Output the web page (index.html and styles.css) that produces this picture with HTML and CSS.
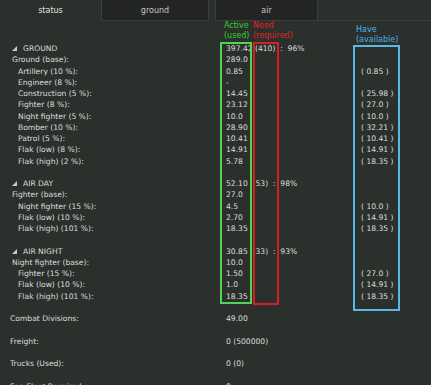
FILE: index.html
```html
<!DOCTYPE html>
<html lang="en">
<head>
    <meta charset="UTF-8">
    <meta name="viewport" content="width=device-width, initial-scale=1.0">
    <title>status</title>
    <link rel="stylesheet" href="styles.css">
</head>
<body>
    <div class="tabs">
        <div class="tab active">status</div>
        <div class="tab wide">ground</div>
        <div class="tab">air</div>
        <div class="tab-fill"></div>
    </div>

    <div class="panel">
        <div class="row head"><span class="lbl"><svg class="tri" width="5" height="5" viewBox="0 0 5 5"><polygon points="5,0 5,5 0,5"/></svg>GROUND</span><span class="val">397.42 (410)  :  96%</span><span></span></div>
        <div class="row"><span class="lbl">Ground (base):</span><span class="val">289.0</span><span></span></div>
        <div class="row"><span class="lbl sub">Artillery (10 %):</span><span class="val">0.85</span><span>( 0.85 )</span></div>
        <div class="row"><span class="lbl sub">Engineer (8 %):</span><span class="val">-</span><span></span></div>
        <div class="row"><span class="lbl sub">Construction (5 %):</span><span class="val">14.45</span><span>( 25.98 )</span></div>
        <div class="row"><span class="lbl sub">Fighter (8 %):</span><span class="val">23.12</span><span>( 27.0 )</span></div>
        <div class="row"><span class="lbl sub">Night fighter (5 %):</span><span class="val">10.0</span><span>( 10.0 )</span></div>
        <div class="row"><span class="lbl sub">Bomber (10 %):</span><span class="val">28.90</span><span>( 32.21 )</span></div>
        <div class="row"><span class="lbl sub">Patrol (5 %):</span><span class="val">10.41</span><span>( 10.41 )</span></div>
        <div class="row"><span class="lbl sub">Flak (low) (8 %):</span><span class="val">14.91</span><span>( 14.91 )</span></div>
        <div class="row"><span class="lbl sub">Flak (high) (2 %):</span><span class="val">5.78</span><span>( 18.35 )</span></div>
        <div class="row blank"></div>

        <div class="row head"><span class="lbl"><svg class="tri" width="5" height="5" viewBox="0 0 5 5"><polygon points="5,0 5,5 0,5"/></svg>AIR DAY</span><span class="val">52.10  (53)  :  98%</span><span></span></div>
        <div class="row"><span class="lbl">Fighter (base):</span><span class="val">27.0</span><span></span></div>
        <div class="row"><span class="lbl sub">Night fighter (15 %):</span><span class="val">4.5</span><span>( 10.0 )</span></div>
        <div class="row"><span class="lbl sub">Flak (low) (10 %):</span><span class="val">2.70</span><span>( 14.91 )</span></div>
        <div class="row"><span class="lbl sub">Flak (high) (101 %):</span><span class="val">18.35</span><span>( 18.35 )</span></div>
        <div class="row blank"></div>

        <div class="row head"><span class="lbl"><svg class="tri" width="5" height="5" viewBox="0 0 5 5"><polygon points="5,0 5,5 0,5"/></svg>AIR NIGHT</span><span class="val">30.85  (33)  :  93%</span><span></span></div>
        <div class="row"><span class="lbl">Night fighter (base):</span><span class="val">10.0</span><span></span></div>
        <div class="row"><span class="lbl sub">Fighter (15 %):</span><span class="val">1.50</span><span>( 27.0 )</span></div>
        <div class="row"><span class="lbl sub">Flak (low) (10 %):</span><span class="val">1.0</span><span>( 14.91 )</span></div>
        <div class="row"><span class="lbl sub">Flak (high) (101 %):</span><span class="val">18.35</span><span>( 18.35 )</span></div>
        <div class="row blank"></div>

        <div class="row stat"><span class="lbl">Combat Divisions:</span><span class="val">49.00</span><span></span></div>
        <div class="row blank"></div>
        <div class="row stat"><span class="lbl">Freight:</span><span class="val">0 (500000)</span><span></span></div>
        <div class="row blank"></div>
        <div class="row stat"><span class="lbl">Trucks (Used):</span><span class="val">0 (0)</span><span></span></div>
        <div class="row blank"></div>
        <div class="row stat"><span class="lbl">Sea Fleet Required:</span><span class="val">0</span><span></span></div>
    </div>

    <!-- annotations drawn over the screenshot -->
    <div class="note note-active">Active<br>(used)</div>
    <div class="note note-need">Need<br>(required)</div>
    <div class="note note-have">Have<br>(available)</div>
    <div class="box box-active"></div>
    <div class="box box-need"></div>
    <div class="box box-have"></div>
</body>
</html>
```

FILE: styles.css
```css
body {
    margin: 0;
    background-color: #2b302d;
    color: #dcdedc;
    font-family: "DejaVu Sans", sans-serif;
    font-size: 7.6px;
    position: relative;
    height: 385px;
    overflow: hidden;
}
.tabs {
    display: flex;
    height: 21px;
}
.tab {
    width: 103px;
    box-sizing: border-box;
    display: flex;
    align-items: center;
    justify-content: center;
    background-color: #222523;
    border: 1px solid #3a3f3b;
    border-top: none;
    color: #c4c6c4;
    font-size: 8px;
}
.tab.wide {
    width: 108px;
    margin-right: 6px;
}
.tab.active {
    width: 101px;
    background-color: #2b302d;
    border: none;
    color: #e0e0e0;
}
.tab-fill {
    flex: 1;
    border-bottom: 1px solid #3a3f3b;
}
.panel {
    padding: 22px 0 0 12px;
}
.row {
    display: grid;
    grid-template-columns: 214px 135px auto;
    height: 11.25px;
    line-height: 11.25px;
    white-space: pre;
}
.lbl.sub {
    padding-left: 6px;
}
.head .lbl {
    display: flex;
    align-items: center;
}
.tri {
    fill: #c8cac8;
    margin-right: 6px;
}
.stat .lbl {
    margin-left: -2px;
}
.note {
    position: absolute;
    font-size: 8px;
    line-height: 10px;
}
.note-active {
    left: 224px;
    top: 21px;
    color: #2fd02f;
}
.note-need {
    left: 253px;
    top: 21px;
    color: #e02424;
}
.note-have {
    left: 356px;
    top: 25px;
    color: #4cb0e4;
}
.box {
    position: absolute;
    box-sizing: border-box;
    border: 2px solid;
}
.box-active {
    left: 220px;
    top: 42px;
    width: 32px;
    height: 262px;
    border-color: #52d652;
}
.box-need {
    left: 253px;
    top: 42px;
    width: 26px;
    height: 263px;
    border-color: #d42020;
}
.box-have {
    left: 353px;
    top: 45px;
    width: 47px;
    height: 266px;
    border-color: #5ab8e6;
}
```
